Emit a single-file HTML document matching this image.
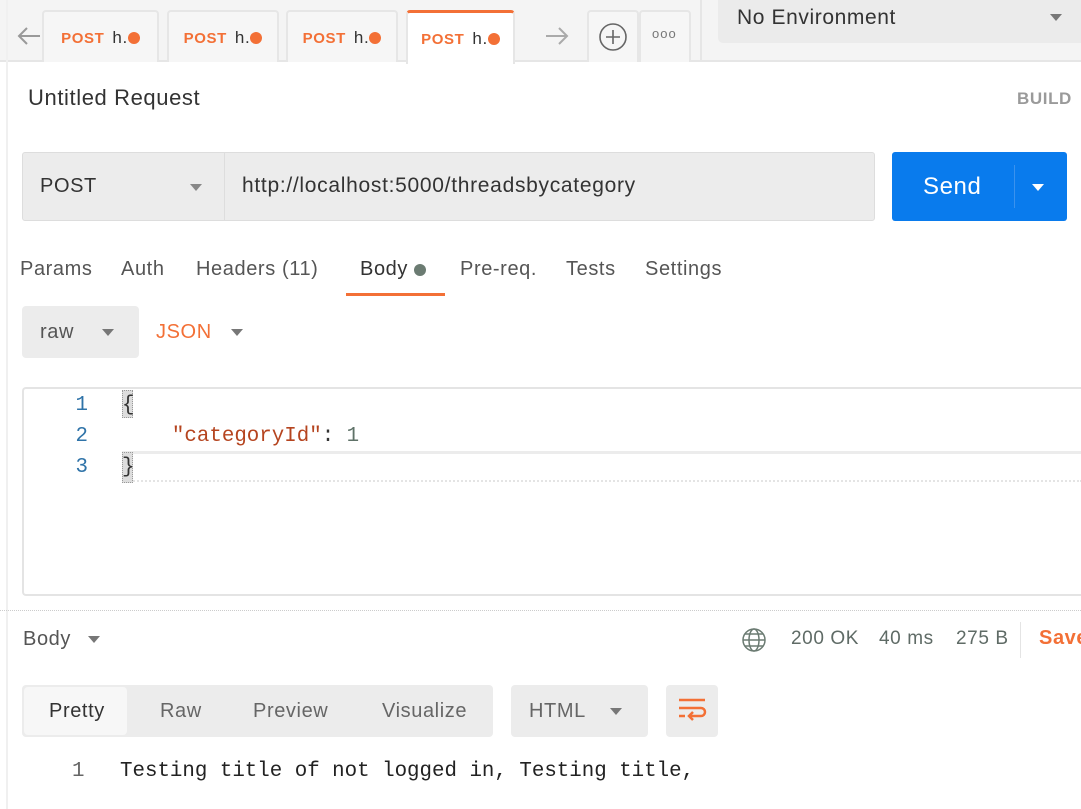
<!DOCTYPE html>
<html><head><style>
*{margin:0;padding:0;box-sizing:border-box}
body{width:1081px;height:809px;overflow:hidden;background:#fff;font-family:"Liberation Sans",sans-serif;position:relative;color:#333;letter-spacing:0.6px}
.a{position:absolute}
.tab{position:absolute;top:10px;height:52px;border:2px solid #e6e6e6;border-bottom:none;border-radius:4px 4px 0 0;background:#f6f6f6;font-size:17px;line-height:52px;text-align:center}
.tab b{color:#f37036;font-size:15px;margin-right:8px}
.dot{display:inline-block;width:12px;height:12px;border-radius:50%;background:#f37036;vertical-align:-1px}
.box{position:absolute;background:#ececec;border-radius:4px}
.mono{font-family:"Liberation Mono",monospace;letter-spacing:0}
.caret{position:absolute;width:0;height:0;border-left:6px solid transparent;border-right:6px solid transparent;border-top:7px solid #777}
.t{font-size:20px;color:#555}
</style></head><body>
<div class="a" style="left:0;top:0;width:1081px;height:62px;background:#f4f4f4;border-bottom:2px solid #e6e6e6"></div>
<div class="a" style="left:6px;top:0;width:2px;height:809px;background:#f0f0f0"></div>
<svg class="a" style="left:16px;top:26px" width="26" height="20"><path d="M24 10H3M11 2L3 10l8 8" stroke="#999" stroke-width="2" fill="none"/></svg>
<div class="tab" style="left:42px;width:117px"><b>POST</b>h.<span class="dot"></span></div>
<div class="tab" style="left:167px;width:112px"><b>POST</b>h.<span class="dot"></span></div>
<div class="tab" style="left:286px;width:112px"><b>POST</b>h.<span class="dot"></span></div>
<div class="tab" style="left:406px;width:109px;background:#fff;border-top:3px solid #f37036;height:54px"><b>POST</b>h.<span class="dot"></span></div>
<svg class="a" style="left:544px;top:26px" width="26" height="20"><path d="M2 10h21M15 2l8 8-8 8" stroke="#aaa" stroke-width="2" fill="none"/></svg>
<div class="tab" style="left:587px;width:52px"></div>
<div class="tab" style="left:639px;width:52px"></div>
<svg class="a" style="left:598px;top:22px" width="30" height="30"><circle cx="15" cy="15" r="13" stroke="#666" stroke-width="1.6" fill="none"/><path d="M15 8v14M8 15h14" stroke="#666" stroke-width="1.6"/></svg>
<div class="a" style="left:652px;top:26px;font-size:13px;color:#777;letter-spacing:1px">ooo</div>
<div class="a" style="left:700px;top:0;width:2px;height:62px;background:#e6e6e6"></div>
<div class="a" style="left:718px;top:0;width:363px;height:43px;background:#ebebeb;border-radius:0 0 0 5px"></div>
<div class="a" style="left:737px;top:6px;font-size:21px;color:#333">No Environment</div>
<div class="caret" style="left:1050px;top:14px"></div>
<div class="a" style="left:28px;top:85px;font-size:22px;color:#333">Untitled Request</div>
<div class="a" style="left:1017px;top:89px;font-size:17px;color:#9a9a9a;font-weight:bold">BUILD</div>
<div class="a" style="left:22px;top:152px;width:853px;height:69px;background:#ececec;border:1px solid #ddd;border-radius:3px"></div>
<div class="a" style="left:224px;top:152px;width:1px;height:69px;background:#ddd"></div>
<div class="a" style="left:40px;top:175px;font-size:20px;color:#333">POST</div>
<div class="caret" style="left:190px;top:184px;border-top-color:#888"></div>
<div class="a" style="left:242px;top:174px;font-size:21px;color:#333;letter-spacing:0.7px">http://localhost:5000/threadsbycategory</div>
<div class="a" style="left:892px;top:152px;width:175px;height:69px;background:#097bed;border-radius:3px"></div>
<div class="a" style="left:923px;top:173px;font-size:24px;color:#fff">Send</div>
<div class="a" style="left:1014px;top:165px;width:1px;height:43px;background:#3a92ee"></div>
<div class="caret" style="left:1032px;top:184px;border-top-color:#fff"></div>
<div class="a t" style="left:20px;top:258px">Params</div>
<div class="a t" style="left:121px;top:258px">Auth</div>
<div class="a t" style="left:196px;top:258px">Headers (11)</div>
<div class="a t" style="left:360px;top:258px;color:#333">Body <span class="dot" style="background:#6b7b72"></span></div>
<div class="a" style="left:346px;top:293px;width:99px;height:3px;background:#f37036"></div>
<div class="a t" style="left:460px;top:258px">Pre-req.</div>
<div class="a t" style="left:566px;top:258px">Tests</div>
<div class="a t" style="left:645px;top:258px">Settings</div>
<div class="box" style="left:22px;top:306px;width:117px;height:52px"></div>
<div class="a t" style="left:40px;top:321px">raw</div>
<div class="caret" style="left:102px;top:329px"></div>
<div class="a t" style="left:156px;top:321px;color:#f37036">JSON</div>
<div class="caret" style="left:231px;top:329px"></div>
<div class="a" style="left:22px;top:387px;width:1070px;height:209px;border:2px solid #e4e4e4;border-right:none;border-radius:4px 0 0 4px"></div>
<div class="a" style="left:122px;top:451px;width:960px;height:31px;border-top:3px solid #ececec;border-bottom:2px dotted #e4e4e4"></div>
<div class="a" style="left:122px;top:390px;width:11px;height:28px;background:#ddd;border:1px dotted #999"></div>
<div class="a" style="left:122px;top:452px;width:11px;height:31px;background:#ddd;border:1px dotted #999"></div>
<div class="a mono" style="left:68px;top:390px;font-size:20.8px;line-height:31px;color:#2f73a8;text-align:right;width:20px">1<br>2<br>3</div>
<div class="a mono" style="left:122px;top:390px;font-size:20.8px;line-height:31px;color:#333;white-space:pre">{
    <span style="color:#b5441f">"categoryId"</span>: <span style="color:#5f7268">1</span>
}</div>
<div class="a" style="left:0;top:610px;width:1081px;border-top:1px dotted #ccc"></div>
<div class="a t" style="left:23px;top:628px">Body</div>
<div class="caret" style="left:88px;top:636px"></div>
<svg class="a" style="left:741px;top:627px" width="26" height="26"><g stroke="#6b7b72" stroke-width="1.5" fill="none"><circle cx="13" cy="13" r="11"/><ellipse cx="13" cy="13" rx="5" ry="11"/><path d="M2 13h22M4 7h18M4 19h18"/></g></svg>
<div class="a" style="left:791px;top:628px;font-size:19px;color:#5f6b66">200 OK</div>
<div class="a" style="left:879px;top:628px;font-size:19px;color:#5f6b66">40 ms</div>
<div class="a" style="left:956px;top:628px;font-size:19px;color:#5f6b66">275 B</div>
<div class="a" style="left:1020px;top:622px;width:1px;height:36px;background:#e4e4e4"></div>
<div class="a" style="left:1039px;top:627px;font-size:20px;color:#f37036;font-weight:bold">Save</div>
<div class="box" style="left:22px;top:685px;width:471px;height:52px"></div>
<div class="a" style="left:24px;top:687px;width:103px;height:48px;background:#f7f7f7;border-radius:4px"></div>
<div class="a t" style="left:49px;top:700px;color:#333">Pretty</div>
<div class="a t" style="left:160px;top:700px;color:#666">Raw</div>
<div class="a t" style="left:253px;top:700px;color:#666">Preview</div>
<div class="a t" style="left:382px;top:700px;color:#666">Visualize</div>
<div class="box" style="left:511px;top:685px;width:137px;height:52px"></div>
<div class="a t" style="left:529px;top:700px;color:#666">HTML</div>
<div class="caret" style="left:610px;top:708px"></div>
<div class="box" style="left:666px;top:685px;width:52px;height:52px"></div>
<svg class="a" style="left:676px;top:695px" width="32" height="32"><g stroke="#f37036" stroke-width="2.5" fill="none"><path d="M3 5h26M3 13h22a4 4 0 0 1 0 8H13M3 21h6"/><path d="M17 17l-4 4 4 4"/></g></svg>
<div class="a mono" style="left:72px;top:760px;font-size:20.8px;color:#666">1</div>
<div class="a mono" style="left:120px;top:760px;font-size:20.8px;color:#222">Testing title of not logged in, Testing title,</div>
</body></html>
